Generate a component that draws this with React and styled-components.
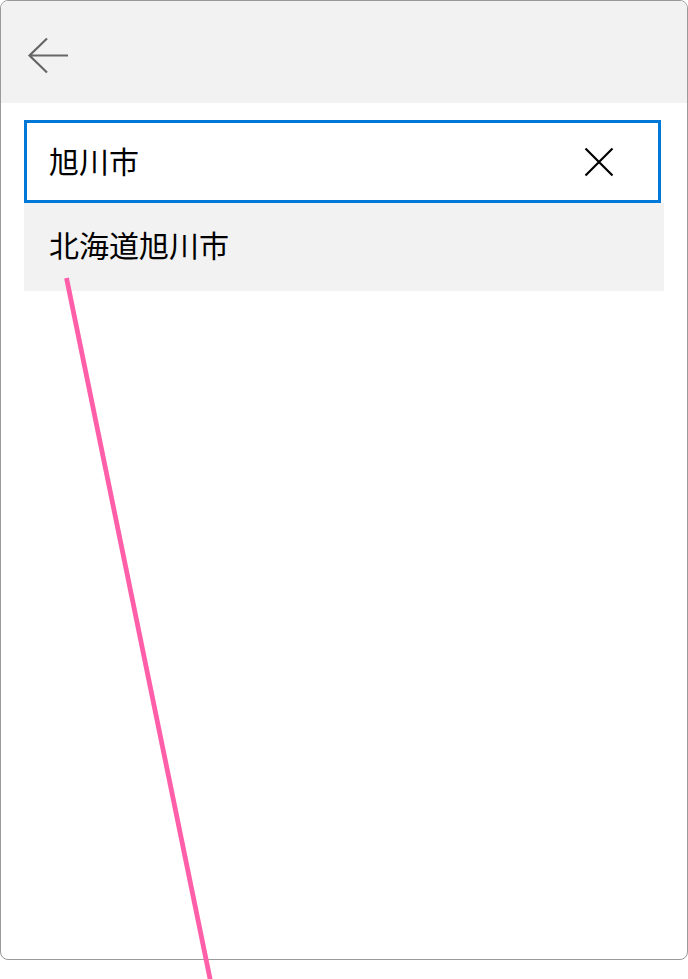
import styled, { createGlobalStyle } from "styled-components";

const GlobalStyle = createGlobalStyle`
    html, body {
        margin: 0;
        padding: 0;
        background: #ffffff;
    }

    body {
        font-family: "Noto Sans CJK JP", "Noto Sans", sans-serif;
        color: #000000;
    }
`

function BackIcon() {
    return (
        <svg width="42" height="37" viewBox="0 0 42 37" fill="none">
            <path d="M20 1.5 L2.5 18.5 L20 35.5 M2.5 18.5 H41" stroke="#666666" strokeWidth="2.2" />
        </svg>
    )
}

function ClearIcon() {
    return (
        <svg width="30" height="30" viewBox="0 0 30 30" fill="none">
            <path d="M1.5 1.5 L28.5 28.5 M28.5 1.5 L1.5 28.5" stroke="#000000" strokeWidth="2.2" />
        </svg>
    )
}

function App() {
    const query = "旭川市";
    const suggestions = ["北海道旭川市"];

    return (
        <Page>
            <GlobalStyle />
            <Frame>
                <Header>
                    <BackButton aria-label="戻る">
                        <BackIcon />
                    </BackButton>
                </Header>
                <Content>
                    <SearchBox>
                        <SearchInput value={query} readOnly />
                        <ClearButton aria-label="クリア">
                            <ClearIcon />
                        </ClearButton>
                    </SearchBox>
                    <SuggestionList>
                        {suggestions.map((item) => (
                            <Suggestion key={item}>{item}</Suggestion>
                        ))}
                    </SuggestionList>
                </Content>
            </Frame>
            <Pointer width="688" height="979" viewBox="0 0 688 979">
                <line x1="66.5" y1="278" x2="210.5" y2="981" stroke="#ff5fa9" strokeWidth="4.8" />
            </Pointer>
        </Page>
    )
}

const Page = styled.div`
    position: relative;
    width: 688px;
    height: 979px;
    overflow: hidden;
    background: #ffffff;
`

const Frame = styled.div`
    width: 688px;
    height: 960px;
    box-sizing: border-box;
    border: 1px solid #9a9a9a;
    border-radius: 8px;
    overflow: hidden;
    background: #ffffff;
`

const Header = styled.div`
    height: 102px;
    background: #f2f2f2;
    display: flex;
    align-items: center;
    padding-left: 26px;
`

const BackButton = styled.button`
    border: none;
    background: transparent;
    padding: 0;
    margin-top: 6px;
    display: flex;
    cursor: pointer;
`

const Content = styled.div`
    padding: 17px 23px 0 23px;
`

const SearchBox = styled.div`
    height: 83px;
    box-sizing: border-box;
    margin-right: 3px;
    border: 3px solid #0078d7;
    background: #ffffff;
    display: flex;
    align-items: center;
    padding-left: 22px;
    padding-right: 44px;
`

const SearchInput = styled.input`
    flex: 1;
    min-width: 0;
    border: none;
    outline: none;
    background: transparent;
    padding: 0 0 3px 0;
    font-family: "Noto Sans CJK JP", "Noto Sans", sans-serif;
    font-size: 30px;
    color: #000000;
`

const ClearButton = styled.button`
    border: none;
    background: transparent;
    padding: 0;
    display: flex;
    cursor: pointer;
`

const SuggestionList = styled.div`
    display: flex;
    flex-direction: column;
`

const Suggestion = styled.div`
    height: 88px;
    box-sizing: border-box;
    background: #f2f2f2;
    display: flex;
    align-items: center;
    padding: 0 0 6px 25px;
    font-size: 30px;
    color: #000000;
`

const Pointer = styled.svg`
    position: absolute;
    top: 0;
    left: 0;
    pointer-events: none;
`

export default App
